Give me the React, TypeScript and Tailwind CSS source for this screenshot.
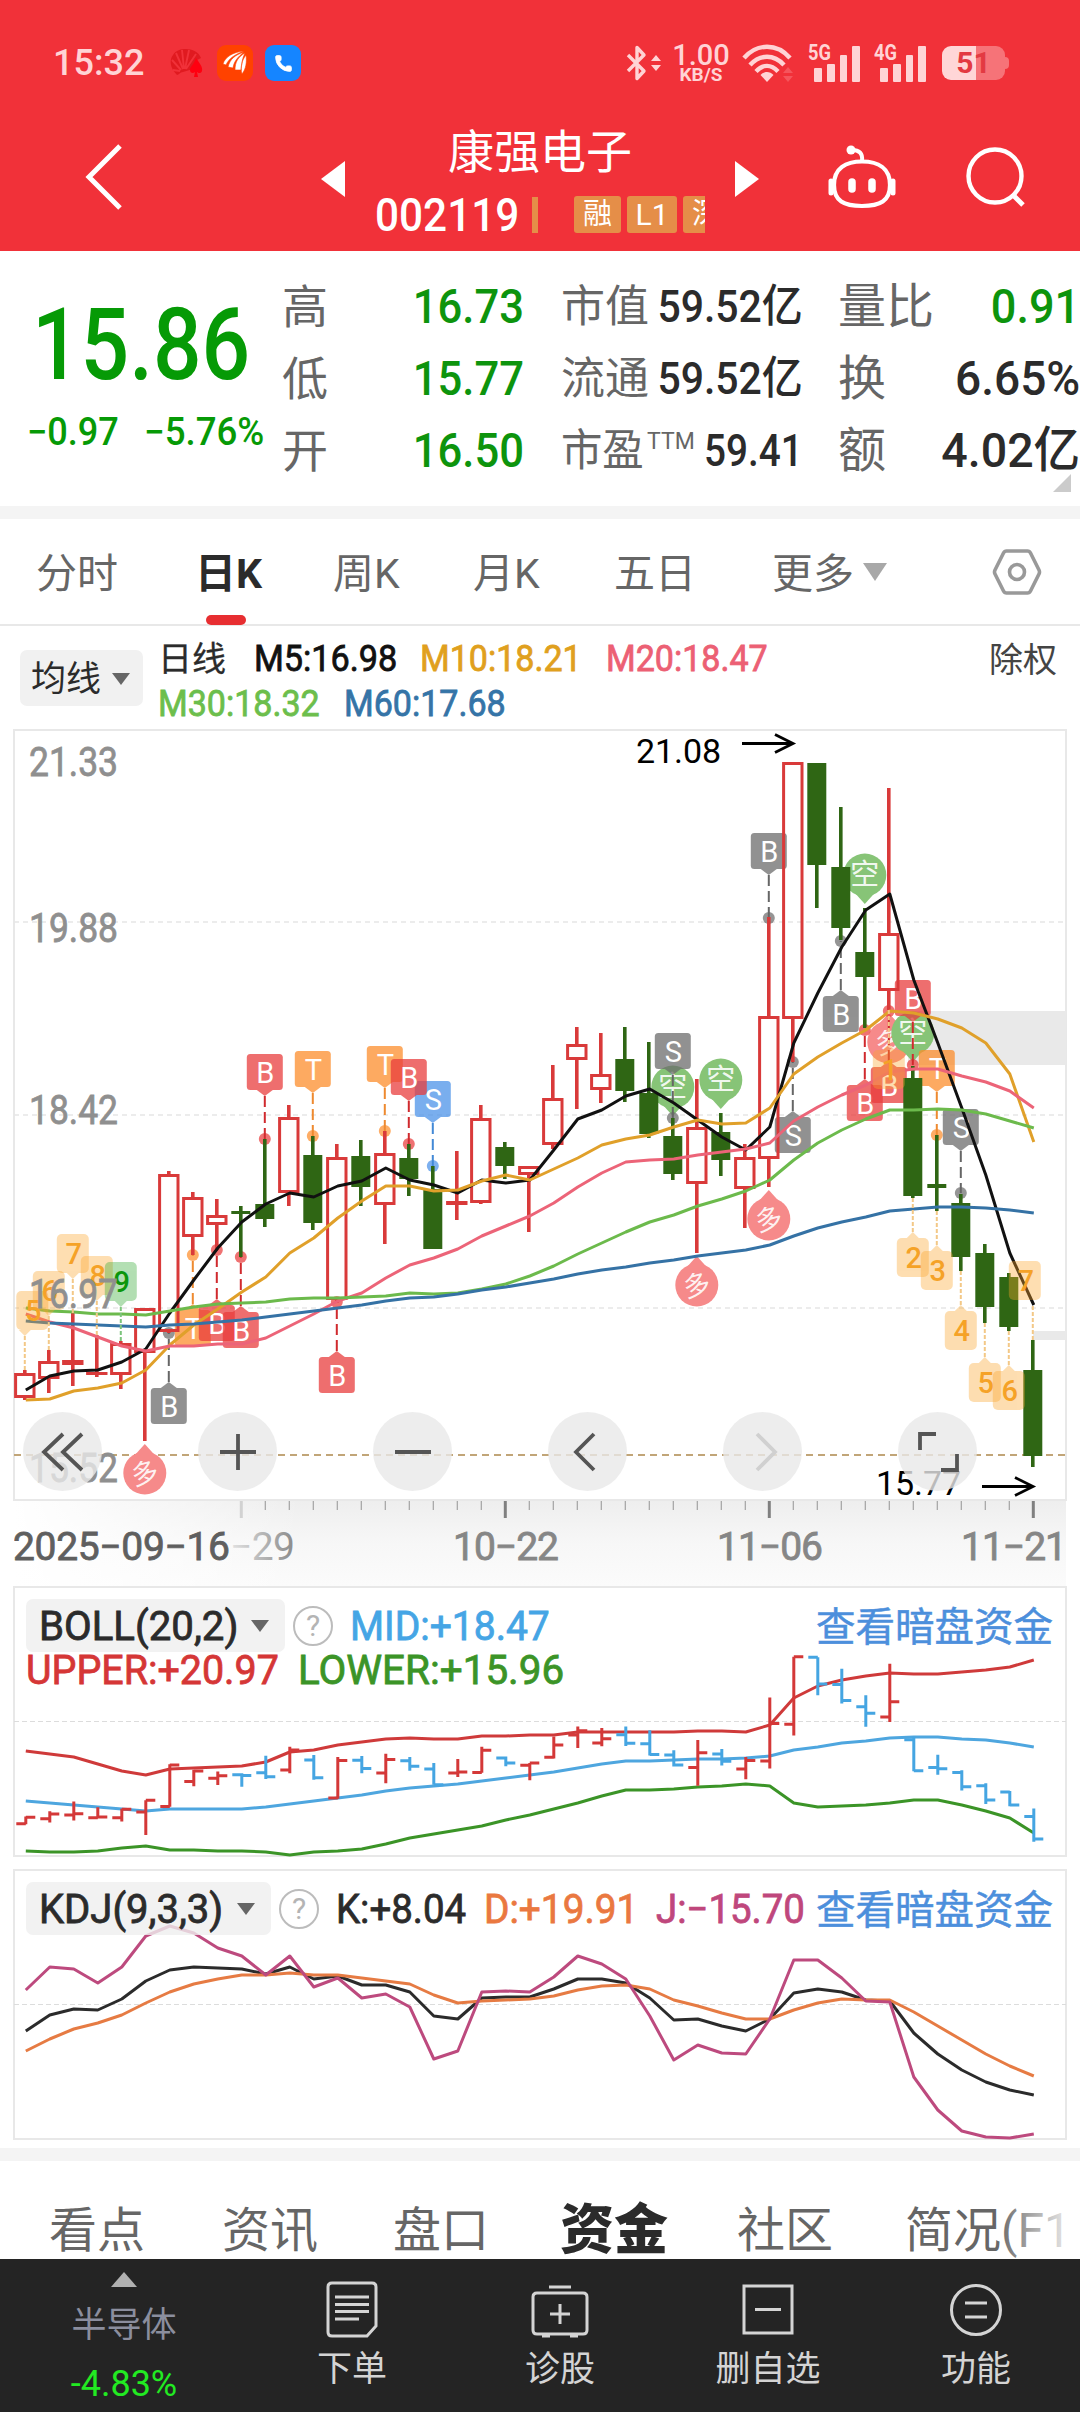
import { Phone } from 'lucide-react';

// ============================================
// DATA
// ============================================

type Candle = [up: 0 | 1, high: number, top: number, bottom: number, low: number];

// Chart geometry: one candle every STEP pixels
const X0 = 24.8;
const STEP = 24;
const cx = (i: number) => X0 + STEP * i;

const candles: Candle[] = [
  [1, 1370, 1373, 1398, 1400], [1, 1350, 1361, 1379, 1393], [1, 1313, 1360, 1365, 1386],
  [1, 1335, 1372, 1375, 1377], [1, 1341, 1343, 1375, 1389], [1, 1308, 1308, 1353, 1441],
  [1, 1171, 1174, 1332, 1333], [1, 1192, 1197, 1237, 1255], [1, 1199, 1215, 1225, 1250],
  [0, 1206, 1211, 1214, 1257], [0, 1139, 1204, 1219, 1227], [1, 1105, 1117, 1193, 1206],
  [0, 1136, 1155, 1223, 1230], [1, 1144, 1157, 1300, 1303], [0, 1140, 1156, 1187, 1206],
  [1, 1131, 1153, 1205, 1244], [0, 1144, 1158, 1179, 1196], [0, 1166, 1189, 1249, 1249],
  [1, 1151, 1201, 1205, 1220], [1, 1105, 1118, 1203, 1204], [0, 1142, 1147, 1166, 1179],
  [1, 1166, 1166, 1175, 1232], [1, 1065, 1098, 1145, 1149], [1, 1027, 1044, 1060, 1109],
  [1, 1033, 1074, 1090, 1103], [0, 1027, 1059, 1091, 1102], [0, 1042, 1093, 1134, 1138],
  [0, 1118, 1136, 1174, 1180], [1, 1079, 1127, 1184, 1253], [0, 1113, 1132, 1160, 1176],
  [1, 1144, 1157, 1189, 1228], [1, 917, 1016, 1159, 1187], [1, 762, 762, 1019, 1062],
  [0, 763, 763, 865, 908], [0, 807, 867, 928, 940], [0, 908, 952, 977, 1028],
  [1, 788, 933, 991, 1010], [0, 1066, 1078, 1196, 1198], [0, 1135, 1184, 1188, 1211],
  [0, 1194, 1203, 1257, 1271], [0, 1244, 1253, 1307, 1323], [0, 1273, 1277, 1327, 1331],
  [0, 1340, 1370, 1456, 1467],
];

const m5 = [1390, 1376, 1371, 1370, 1362, 1349, 1313, 1280, 1248, 1222, 1204, 1193, 1197, 1186, 1181, 1168, 1180, 1185, 1193, 1180, 1183, 1180, 1150, 1119, 1110, 1096, 1089, 1103, 1120, 1137, 1150, 1127, 1043, 993, 947, 910, 894, 980, 1043, 1108, 1175, 1253, 1305];
const m10 = [1400, 1399, 1391, 1388, 1383, 1370, 1345, 1325, 1309, 1292, 1277, 1253, 1238, 1218, 1201, 1186, 1186, 1191, 1190, 1181, 1175, 1180, 1169, 1158, 1145, 1139, 1135, 1127, 1120, 1124, 1123, 1108, 1074, 1057, 1043, 1030, 1011, 1013, 1019, 1028, 1043, 1074, 1142];
const m20 = [1314, 1322, 1328, 1337, 1346, 1351, 1346, 1346, 1344, 1344, 1338, 1326, 1314, 1301, 1293, 1278, 1265, 1258, 1249, 1236, 1226, 1216, 1203, 1187, 1173, 1162, 1160, 1159, 1155, 1152, 1149, 1143, 1121, 1107, 1095, 1085, 1072, 1069, 1069, 1076, 1082, 1091, 1108];
const m30 = [1308, 1311, 1312, 1314, 1314, 1315, 1311, 1307, 1304, 1303, 1302, 1299, 1298, 1298, 1297, 1296, 1293, 1294, 1293, 1289, 1284, 1276, 1266, 1254, 1243, 1232, 1222, 1215, 1206, 1199, 1191, 1180, 1160, 1143, 1130, 1119, 1110, 1110, 1109, 1110, 1114, 1121, 1128];
const m60 = [1321, 1323, 1324, 1325, 1326, 1327, 1325, 1324, 1322, 1320, 1317, 1314, 1311, 1308, 1305, 1301, 1298, 1297, 1294, 1290, 1287, 1283, 1279, 1274, 1270, 1267, 1263, 1260, 1256, 1253, 1250, 1245, 1236, 1228, 1222, 1217, 1211, 1209, 1207, 1207, 1208, 1210, 1213];

const bollUp = [1751, 1754, 1757, 1764, 1771, 1775, 1769, 1768, 1767, 1766, 1762, 1752, 1750, 1745, 1742, 1739, 1738, 1739, 1739, 1736, 1736, 1735, 1735, 1732, 1732, 1732, 1732, 1732, 1731, 1731, 1732, 1725, 1698, 1686, 1680, 1676, 1673, 1674, 1674, 1672, 1670, 1667, 1660];
const bollMid = [1801, 1803, 1805, 1807, 1809, 1811, 1809, 1809, 1809, 1809, 1807, 1804, 1801, 1798, 1795, 1791, 1788, 1786, 1784, 1781, 1778, 1775, 1772, 1768, 1764, 1761, 1761, 1760, 1759, 1759, 1758, 1756, 1750, 1747, 1743, 1741, 1738, 1737, 1737, 1739, 1740, 1743, 1747];
const bollLow = [1851, 1852, 1852, 1851, 1848, 1846, 1850, 1850, 1851, 1851, 1852, 1855, 1852, 1851, 1849, 1844, 1838, 1834, 1830, 1826, 1820, 1815, 1809, 1803, 1796, 1790, 1790, 1789, 1787, 1786, 1784, 1786, 1803, 1807, 1806, 1805, 1803, 1800, 1800, 1805, 1811, 1818, 1833];

const kLine = [2031, 2015, 2009, 2010, 1999, 1981, 1970, 1967, 1968, 1969, 1974, 1967, 1979, 1976, 1985, 1985, 1992, 2016, 2019, 1998, 1997, 1997, 1989, 1979, 1979, 1983, 1998, 2020, 2019, 2026, 2031, 2019, 1993, 1989, 1992, 2000, 2001, 2033, 2054, 2070, 2082, 2090, 2095];
const dLine = [2051, 2039, 2029, 2023, 2015, 2003, 1992, 1984, 1979, 1975, 1975, 1973, 1975, 1975, 1978, 1981, 1984, 1995, 2003, 2001, 2000, 1999, 1996, 1990, 1986, 1985, 1989, 2000, 2006, 2013, 2019, 2019, 2010, 2003, 1999, 2000, 2000, 2012, 2026, 2040, 2054, 2066, 2076];
const jLine = [1990, 1967, 1969, 1983, 1967, 1936, 1926, 1933, 1948, 1956, 1975, 1956, 1987, 1978, 1998, 1994, 2007, 2059, 2051, 1992, 1991, 1992, 1977, 1956, 1964, 1979, 2016, 2060, 2045, 2053, 2054, 2019, 1960, 1960, 1978, 2001, 2002, 2077, 2110, 2131, 2137, 2138, 2134];

const RED = '#d93a3a';
const GREEN = '#2f6614';

const tagFill: Record<string, string> = { r: '#e93c3c', o: '#fd8d2b', b: '#4b92e9', g: '#6c6c6c' };
const stemFill: Record<string, string> = { r: '#d02a2e', o: '#ee8a30', b: '#4389d6', g: '#666666' };

// index, letter, tone, y of the dot, y of the box top
const tags: [number, string, string, number, number][] = [
  [7, 'T', 'o', 1255, 1310], [8, 'B', 'r', 1250, 1305], [9, 'B', 'r', 1257, 1312],
  [6, 'B', 'g', 1333, 1388], [10, 'B', 'r', 1139, 1054], [12, 'T', 'o', 1136, 1051],
  [13, 'B', 'r', 1302, 1357], [15, 'T', 'o', 1131, 1046], [17, 'S', 'b', 1166, 1081],
  [16, 'B', 'r', 1144, 1059], [27, 'S', 'g', 1118, 1033], [31, 'B', 'g', 918, 833],
  [32, 'S', 'g', 1062, 1117], [34, 'B', 'g', 941, 996], [35, 'B', 'r', 1030, 1085],
  [36, 'B', 'r', 1011, 1067], [37, 'B', 'r', 1065, 980], [38, 'T', 'o', 1135, 1050],
  [39, 'S', 'g', 1193, 1109],
];

// index, x shift, digit, y where the dotted stem starts, above/below
const counts: [number, number, string, number, 'up' | 'down'][] = [
  [0, 7.5, '5', 1370, 'up'], [1, 0, '6', 1350, 'up'], [2, 0, '7', 1313, 'up'],
  [3, 0, '8', 1335, 'up'], [4, 0, '9', 1341, 'up'], [36, 0, '1', 1010, 'down'],
  [37, 0, '2', 1198, 'down'], [38, 0, '3', 1211, 'down'], [39, 0, '4', 1271, 'down'],
  [40, 0, '5', 1323, 'down'], [41, 0, '6', 1331, 'down'], [42, -8, '7', 1340, 'up'],
];

const bubbles: [number, string, number][] = [
  [5, '多', 1473], [28, '多', 1285], [31, '多', 1219], [36, '多', 1042],
  [27, '空', 1087], [29, '空', 1080], [35, '空', 875], [37, '空', 1033],
];

// ============================================
// CHART PIECES
// ============================================

function Line({ data, color, width = 3 }: { data: number[]; color: string; width?: number }) {
  const points = data.map((y, i) => `${cx(i) + 1},${y}`).join(' ');
  return <polyline points={points} fill="none" stroke={color} strokeWidth={width} strokeLinejoin="round" />;
}

function Tag({ tag: [i, letter, tone, dot, top] }: { tag: [number, string, string, number, number] }) {
  const x = cx(i);
  const above = top < dot;
  const edge = above ? top + 36 : top;
  const tip = above ? edge + 6 : edge - 6;
  return (
    <g>
      <circle cx={x} cy={dot} r="6" fill={tagFill[tone]} opacity=".72" />
      <line x1={x} x2={x} y1={tip} y2={dot} stroke={stemFill[tone]} strokeWidth="2" strokeDasharray="11 5" />
      <g opacity=".74" fill={tagFill[tone]}>
        <rect x={x - 18} y={top} width="36" height="36" rx="3.5" />
        <path d={`M${x - 8} ${edge}L${x} ${tip}L${x + 8} ${edge}z`} />
      </g>
      <text x={x + 0.5} y={top + 28.5} fontSize="29" fill="#fff" textAnchor="middle">{letter}</text>
    </g>
  );
}

function Count({ item: [i, dx, digit, start, dir] }: { item: [number, number, string, number, 'up' | 'down'] }) {
  const x = cx(i);
  const bx = x + dx;
  const tip = dir === 'up' ? start - 34 : start + 34;
  const edge = dir === 'up' ? tip - 6 : tip + 6;
  const top = dir === 'up' ? edge - 39 : edge;
  const green = digit === '9';
  return (
    <g>
      <line x1={x} x2={x} y1={start} y2={tip} stroke={green ? '#7cc47c' : '#f3c887'} strokeWidth="2" strokeDasharray="4 2" />
      <g opacity=".37" fill={green ? '#31a831' : '#fba62c'}>
        <rect x={bx - 16} y={top} width="32" height="39" rx="5" />
        {dx > -1 && <path d={`M${x - 6} ${edge}L${x} ${tip}L${x + 6} ${edge}z`} />}
      </g>
      <text x={bx + 1} y={top + 30} fontSize="29" fontWeight="500" fill={green ? '#0b960b' : '#f5a227'} textAnchor="middle">{digit}</text>
    </g>
  );
}

function Bubble({ item: [i, label, y] }: { item: [number, string, number] }) {
  const x = cx(i);
  const long = label === '多';
  const color = long ? '#f68a8a' : '#87c477';
  return (
    <g>
      <circle cx={x} cy={y} r="21.5" fill={color} />
      <path d={long ? `M${x - 9} ${y - 19}L${x} ${y - 29}L${x + 9} ${y - 19}z` : `M${x - 9} ${y + 19}L${x} ${y + 29}L${x + 9} ${y + 19}z`} fill={color} />
      <text x={x} y={y + 10} fontSize={long ? 27 : 29} fill="#fff" fillOpacity=".9" textAnchor="middle" transform={long ? `rotate(-14 ${x} ${y})` : undefined}>{label}</text>
    </g>
  );
}

function CandleStick({ i, c: [up, high, top, bottom, low] }: { i: number; c: Candle }) {
  const x = cx(i);
  if (!up) {
    return (
      <g fill={GREEN}>
        <rect x={x - 1.8} y={high} width="3.6" height={low - high} />
        <rect x={x - 9.5} y={top} width="19" height={bottom - top} />
      </g>
    );
  }
  const flat = bottom - top < 7;
  return (
    <g fill={RED}>
      <rect x={x - 1.8} y={high} width="3.6" height={top - high} />
      <rect x={x - 1.8} y={bottom} width="3.6" height={low - bottom} />
      {flat ? (
        <rect x={x - 10.7} y={top} width="21.4" height={bottom - top} />
      ) : (
        <rect x={x - 9.2} y={top + 1.5} width="18.4" height={bottom - top - 3} fill="none" stroke={RED} strokeWidth="3" />
      )}
    </g>
  );
}

function AxisLabel({ y, children }: { y: number; children: string }) {
  return (
    <text x="29" y={y} fontSize="40" fill="#8f8f8f" stroke="#8f8f8f" strokeWidth=".8" textLength="89" lengthAdjust="spacingAndGlyphs">{children}</text>
  );
}

function KChart() {
  return (
    <svg viewBox="0 729 1080 772" className="block h-[772px] w-[1080px]">
      <rect x="14" y="730" width="1052" height="770" fill="#fff" stroke="#e8e8e8" strokeWidth="2" />
      {[922, 1115, 1308].map((y) => (
        <line key={y} x1="14" x2="1066" y1={y} y2={y} stroke="#e6e6e6" strokeWidth="1.6" strokeDasharray="5 4" />
      ))}
      <line x1="14" x2="1066" y1="1455" y2="1455" stroke="#c1a578" strokeWidth="1.8" strokeDasharray="7 5" />
      <rect x="908" y="1011" width="158" height="54" fill="#e9e9e9" />
      <rect x="1033" y="1331" width="33" height="9" fill="#e9e9e9" />

      {bubbles.map((b) => <Bubble key={`${b[0]}${b[2]}`} item={b} />)}
      {tags.map((t) => <Tag key={`${t[0]}${t[3]}`} tag={t} />)}
      {candles.map((c, i) => <CandleStick key={i} i={i} c={c} />)}

      <Line data={m5} color="#111" />
      <Line data={m10} color="#e0a02a" />
      <Line data={m20} color="#ec6478" />
      <Line data={m30} color="#6cba4c" />
      <Line data={m60} color="#3572a5" />

      {counts.map((n) => <Count key={`${n[0]}`} item={n} />)}

      <AxisLabel y={776}>21.33</AxisLabel>
      <AxisLabel y={942}>19.88</AxisLabel>
      <AxisLabel y={1124}>18.42</AxisLabel>
      <AxisLabel y={1308}>16.97</AxisLabel>
      <AxisLabel y={1482}>15.52</AxisLabel>

      <text x="636" y="763" fontSize="34" fill="#000" textLength="85" lengthAdjust="spacing">21.08</text>
      <path d="M742 743.500H793M775 734.500L793 743.500L775 752.500" fill="none" stroke="#000" strokeWidth="2.800" />
      <text x="876" y="1495" fontSize="34" fill="#000" textLength="85" lengthAdjust="spacing">15.77</text>
      <path d="M982 1486.500H1033M1015 1477.500L1033 1486.500L1015 1495.500" fill="none" stroke="#000" strokeWidth="2.800" />
    </svg>
  );
}

function TimeAxis() {
  const ticks = Array.from({ length: 34 }, (_, k) => k + 9);
  return (
    <div className="mx-[14px] h-[85px] bg-gradient-to-b from-[#eeeeee] via-[#f7f7f7] to-[#fbfbfb]">
      <svg viewBox="14 1501 1052 85" className="block h-[85px] w-[1052px]">
        <defs>
          <linearGradient id="fadeLeft">
            <stop offset="0" stopColor="#fff" />
            <stop offset="1" stopColor="#fff" stopOpacity="0" />
          </linearGradient>
          <linearGradient id="fadeText">
            <stop offset="0" stopColor="#e3e3e3" />
            <stop offset="1" stopColor="#8a8a8a" />
          </linearGradient>
        </defs>
        <rect x="14" y="1501" width="290" height="85" fill="url(#fadeLeft)" />
        {ticks.map((i) => {
          const major = (i - 9) % 11 === 0;
          return (
            <line key={i} x1={cx(i) + 0.5} x2={cx(i) + 0.5} y1="1501" y2={major ? 1518 : 1510} stroke={i === 9 ? '#d2d2d2' : major ? '#808080' : '#a2a2a2'} strokeWidth={major ? 3 : 1.2} />
          );
        })}
        <g fontSize="39" fill="#868686" stroke="#868686" strokeWidth=".8">
          <text x="13" y="1560" fill="#5f5f5f" stroke="#5f5f5f" textLength="217" lengthAdjust="spacing">2025−09−16</text>
          <text x="230" y="1560" fill="url(#fadeText)" stroke="none" textLength="65" lengthAdjust="spacing">−29</text>
          <text x="453" y="1560" textLength="106" lengthAdjust="spacing">10−22</text>
          <text x="717" y="1560" textLength="106" lengthAdjust="spacing">11−06</text>
          <text x="961" y="1560" textLength="106" lengthAdjust="spacing">11−21</text>
        </g>
      </svg>
    </div>
  );
}

function BollChart() {
  // Candle prices are squeezed into this panel's own scale
  const py = (y: number) => 1657 + (y - 762.5) * 0.2624;
  return (
    <svg viewBox="0 1586 1080 271" className="block h-[271px] w-[1080px]">
      <rect x="14" y="1587" width="1052" height="269" fill="#fff" stroke="#e8e8e8" strokeWidth="2" />
      <line x1="14" x2="1066" y1="1721.500" y2="1721.500" stroke="#dcdcdc" strokeDasharray="5 3" />
      <Line data={bollUp} color="#cf3a3a" />
      <Line data={bollMid} color="#4ea6df" />
      <Line data={bollLow} color="#3b9427" />
      {candles.map(([up, high, top, bottom, low], i) => {
        const x = cx(i) + 1;
        const open = py(up ? bottom : top);
        const close = py(up ? top : bottom);
        return (
          <path key={i} d={`M${x} ${py(high)}V${py(low)}M${x - 9.5} ${open}H${x}M${x} ${close}H${x + 9.5}`} stroke={up ? '#d43838' : '#45a5e2'} strokeWidth="3" />
        );
      })}
    </svg>
  );
}

function KdjChart() {
  return (
    <svg viewBox="0 1869 1080 271" className="block h-[271px] w-[1080px]">
      <rect x="14" y="1870" width="1052" height="269" fill="#fff" stroke="#e8e8e8" strokeWidth="2" />
      <line x1="14" x2="1066" y1="2004.500" y2="2004.500" stroke="#dcdcdc" strokeDasharray="5 3" />
      <Line data={kLine} color="#2b2b2b" />
      <Line data={dLine} color="#e67b43" />
      <Line data={jLine} color="#bd4a7e" />
    </svg>
  );
}

// ============================================
// SMALL PARTS
// ============================================

function Caret({ className }: { className: string }) {
  return (
    <svg viewBox="0 0 20 14" preserveAspectRatio="none" className={className}>
      <path d="M0 0H20L10 14z" fill="currentColor" />
    </svg>
  );
}

function Help() {
  return (
    <span className="flex h-[40px] w-[40px] shrink-0 items-center justify-center rounded-full border-[2.5px] border-[#bcbcbc] text-[30px] leading-none text-[#b4b4b4]">?</span>
  );
}

function Signal({ label }: { label: string }) {
  return (
    <div className="relative flex h-[37px] w-[52px] items-end gap-[5px] pl-[6px]">
      <span className="absolute -top-[3px] left-0 origin-left scale-x-[.83] text-[22px] font-bold leading-none">{label}</span>
      <span className="h-[14px] w-[8px] rounded-[1px] bg-current" />
      <span className="h-[18px] w-[8px] rounded-[1px] bg-current" />
      <span className="h-[27px] w-[8px] rounded-[1px] bg-current" />
      <span className="h-[36px] w-[8px] rounded-[1px] bg-current" />
    </div>
  );
}

function StatusBar() {
  return (
    <div className="flex h-[82px] items-end justify-between pr-[75px] pl-[53px] text-[#ffd3d5]">
      <div className="flex items-center">
        <span className="w-[116px] text-[36px] font-medium leading-[38px]">15:32</span>
        <svg viewBox="0 0 34 30" className="h-[30px] w-[34px]">
          <path d="M8 27C1 20 0 12 4 7C7 2 12 1 17 1C23 1 30 4 32 10L28 12C31 16 27 18 24 21L14 24C11 24 10 27 8 27z" fill="#e01a20" />
          <path d="M12 22L3 12M14 21L7 5M15 21L13 2M16 21L20 2M17 21L27 6M4 22L11 23" stroke="#f13139" strokeWidth="1.900" />
          <path d="M27 10C31 16 34 19 33 23C32 26 29 25 28 24L29 29H25L26 24C24 26 21 25 21 22C21 19 25 16 27 10z" fill="#ff0010" />
        </svg>
        <svg viewBox="0 0 36 36" className="ml-[14px] h-[36px] w-[36px]">
          <rect width="36" height="36" rx="9" fill="#ff4200" />
          <path d="M6 19C8 12 16 7 27 6C19 9 12 13 9 20zM11 22C13 14 18 10 27 7C21 12 17 16 16 23zM18 25C18 17 21 12 28 8C25 14 25 18 24 25zM25 29C23 22 25 15 29 10C30 17 29 24 25 29z" fill="#fff" stroke="#ff4200" strokeWidth=".6" />
        </svg>
        <span className="ml-[12px] flex h-[36px] w-[36px] items-center justify-center rounded-[9px] bg-[#1585ff]">
          <Phone className="h-[19px] w-[19px] fill-white text-white" strokeWidth={1} />
        </span>
      </div>

      <div className="flex h-[38px] items-center">
        <svg viewBox="0 0 22 38" className="h-[38px] w-[22px]">
          <path d="M2 11L18 27L11 34.500V3.500L18 11L2 27" fill="none" stroke="currentColor" strokeWidth="3.400" strokeLinejoin="round" />
        </svg>
        <svg viewBox="0 0 10 16" className="ml-[3px] h-[16px] w-[10px]">
          <path d="M5 0L10 6H0zM5 16L0 10H10z" fill="currentColor" />
        </svg>
        <div className="ml-[12px] flex w-[56px] flex-col items-center">
          <span className="text-[29px] font-medium leading-[22px]">1.00</span>
          <span className="text-[19px] font-bold leading-[17px]">KB/S</span>
        </div>
        <svg viewBox="0 0 54 38" className="ml-[13px] h-[38px] w-[54px]">
          <g fill="none" stroke="currentColor" strokeWidth="4.400">
            <path d="M2 14C15 -1 35 -1 48 14" />
            <path d="M8 21C18 10 32 10 42 21" />
            <path d="M14 27.500C21 20 29 20 36 27.500" />
          </g>
          <path d="M25 38L18.500 31C22 27 28 27 31.500 31z" fill="currentColor" />
          <path d="M46 23L51 29H41zM46 38L41 32H51z" fill="#f5555c" />
        </svg>
        <div className="ml-[12px]"><Signal label="5G" /></div>
        <div className="ml-[14px]"><Signal label="4G" /></div>
        <div className="relative ml-[16px] flex h-[34px] w-[63px] items-center justify-center rounded-[9px] bg-[linear-gradient(to_right,#ffd6d7_54%,#f67378_54%)]">
          <span className="text-[30px] font-bold leading-none text-[#e33a42]">51</span>
          <span className="absolute -right-[4px] h-[12px] w-[4px] rounded-r bg-[#f67378]" />
        </div>
      </div>
    </div>
  );
}

function TitleBar() {
  return (
    <div className="flex h-[169px] items-center pl-[84px] text-white">
      <svg viewBox="0 0 40 66" className="mt-[20px] h-[66px] w-[40px]">
        <path d="M36 2L5 33L36 64" fill="none" stroke="currentColor" strokeWidth="5" />
      </svg>
      <svg viewBox="0 0 24 36" className="mt-[24px] ml-[197px] h-[36px] w-[24px]">
        <path d="M24 0V36L0 18z" fill="currentColor" />
      </svg>
      <div className="ml-[30px] flex w-[330px] flex-col items-center pt-[26px]">
        <div className="text-[46px] leading-[56px]">康强电子</div>
        <div className="mt-[14px] flex h-[42px] w-full items-center overflow-hidden">
          <span className="w-[157px] shrink-0 origin-left scale-x-[.92] pt-[1px] text-[46px] font-medium leading-[50px]">002119</span>
          <span className="h-[36px] w-[6px] shrink-0 bg-[#e58e48]" />
          <span className="ml-[36px] flex h-[37px] w-[47px] shrink-0 items-center justify-center rounded-[3px] bg-[#e58e48] text-[29px] leading-none">融</span>
          <span className="ml-[6px] flex h-[37px] w-[50px] shrink-0 items-center justify-center rounded-[3px] bg-[#e58e48] text-[30px] leading-none">L1</span>
          <span className="ml-[6px] flex h-[37px] w-[22px] shrink-0 items-center overflow-hidden rounded-l-[3px] bg-[#e58e48] pl-[9px] text-[29px] leading-none">深</span>
        </div>
      </div>
      <svg viewBox="0 0 24 36" className="mt-[24px] ml-[30px] h-[36px] w-[24px]">
        <path d="M0 0V36L24 18z" fill="currentColor" />
      </svg>
      <svg viewBox="0 0 72 66" className="mt-[20px] ml-[67px] h-[66px] w-[72px]" fill="none" stroke="currentColor">
        <path d="M36 17.500C52 17.500 64 24 64 41C64 57 54 62 36 62C18 62 8 57 8 41C8 24 20 17.500 36 17.500z" strokeWidth="4.200" />
        <path d="M5 37V49M67 37V49" strokeWidth="5" strokeLinecap="round" />
        <path d="M36 17C37 9 33 6 26 6" strokeWidth="4" />
        <circle cx="25" cy="6" r="4.500" fill="currentColor" stroke="none" />
        <path d="M26 38V45M46 38V45" strokeWidth="7.500" strokeLinecap="round" />
      </svg>
      <svg viewBox="0 0 62 62" className="mt-[20px] ml-[67px] h-[62px] w-[62px]">
        <circle cx="30" cy="30" r="26.500" fill="none" stroke="currentColor" strokeWidth="4.400" />
        <path d="M47 48L58 59" stroke="currentColor" strokeWidth="5" />
      </svg>
    </div>
  );
}

function QuotePanel() {
  return (
    <section className="relative flex h-[255px] bg-white pt-[20px]">
      <div className="w-[282px] text-[#069a06]">
        <div className="mt-[24px] ml-[32px] origin-left scale-x-[.855] text-[100px] font-medium leading-none">15.86</div>
        <div className="mt-[18px] flex pl-[27px] text-[38px] font-medium leading-none whitespace-nowrap">
          <span className="w-[117px] origin-left scale-x-[.95]">−0.97</span>
          <span className="origin-left scale-x-[.965]">−5.76%</span>
        </div>
      </div>

      <div className="w-[242px] text-[46px] leading-[72px] text-[#666]">
        {[['高', '16.73'], ['低', '15.77'], ['开', '16.50']].map(([label, value]) => (
          <div key={label} className="flex h-[72px] justify-between">
            <span>{label}</span>
            <span className="origin-right scale-x-[.89] text-[49px] font-medium text-[#0d940d]">{value}</span>
          </div>
        ))}
      </div>

      <div className="ml-[37px] w-[242px] text-[44px] leading-[72px] text-[#666]">
        {[['市值', '59.52亿'], ['流通', '59.52亿']].map(([label, value]) => (
          <div key={label} className="flex h-[72px] justify-between whitespace-nowrap">
            <span className="w-[60px] shrink-0">{label}</span>
            <span className="origin-right scale-x-[.91] text-[45px] font-medium text-[#2b2b2b]">{value}</span>
          </div>
        ))}
        <div className="flex h-[72px] whitespace-nowrap">
          <span className="w-[86px] shrink-0 origin-left scale-x-[.94]">市盈</span>
          <span className="-mt-[9px] w-[40px] shrink-0 text-[23px]">TTM</span>
          <span className="ml-auto origin-right scale-x-[.86] text-[45px] font-medium text-[#2b2b2b]">59.41</span>
        </div>
      </div>

      <div className="ml-[35px] w-[242px] text-[48px] leading-[72px] text-[#666]">
        <div className="flex h-[72px] justify-between">
          <span>量比</span>
          <span className="origin-right scale-x-[.92] text-[49px] font-medium text-[#0d940d]">0.91</span>
        </div>
        <div className="flex h-[72px] justify-between">
          <span>换</span>
          <span className="origin-right scale-x-[.94] text-[49px] font-medium text-[#2b2b2b]">6.65%</span>
        </div>
        <div className="flex h-[72px] justify-between">
          <span>额</span>
          <span className="origin-right scale-x-[.95] text-[49px] font-medium text-[#2b2b2b]">4.02亿</span>
        </div>
      </div>
      <svg viewBox="0 0 18 18" className="absolute right-[9px] bottom-[14px] h-[18px] w-[18px]">
        <path d="M18 0V18H0z" fill="#cbcbcb" />
      </svg>
    </section>
  );
}

function PeriodTabs() {
  return (
    <nav className="flex h-[107px] items-center border-b-2 border-[#e8e8e8] bg-white pl-[36px] text-[41px] leading-[60px] whitespace-nowrap text-[#666]">
      <span className="w-[159px] pt-[4px]">分时</span>
      <span className="relative w-[138px] pt-[4px] font-bold text-[#2b2b2b]">
        日K
        <span className="absolute top-[75px] left-[11px] h-[10px] w-[40px] rounded-full bg-[#e72e31]" />
      </span>
      <span className="w-[140px] pt-[4px]">周K</span>
      <span className="w-[141px] pt-[4px]">月K</span>
      <span className="w-[158px] pt-[4px]">五日</span>
      <span className="w-[91px] pt-[4px]">更多</span>
      <Caret className="h-[18px] w-[24px] text-[#a8a8a8]" />
      <svg viewBox="0 0 50 48" className="ml-[105px] h-[48px] w-[50px]" fill="none" stroke="#999" strokeWidth="3.6">
        <path d="M14.500 3H35.500Q37.500 3 38.500 5L47 22Q48 24 47 26L38.500 43Q37.500 45 35.500 45H14.500Q12.500 45 11.500 43L3 26Q2 24 3 22L11.500 5Q12.500 3 14.500 3z" />
        <circle cx="25" cy="24" r="7.500" />
      </svg>
    </nav>
  );
}

function AverageRow() {
  return (
    <div className="flex h-[103px] bg-white pl-[20px]">
      <div className="mt-[24px] flex h-[56px] w-[123px] items-center rounded-[7px] bg-[#f1f1f1] pt-[2px] pl-[11px] text-[35px] leading-none text-[#2b2b2b]">
        均线
        <Caret className="ml-[11px] h-[12px] w-[18px] text-[#666]" />
      </div>
      <div className="ml-[15px] w-[831px] text-[36px] leading-[45px] whitespace-nowrap [-webkit-text-stroke:0.8px]">
        <div className="mt-[11px] flex h-[45px]">
          <span className="w-[96px] text-[34px] text-[#2b2b2b] [-webkit-text-stroke:0.3px]">日线</span>
          <span className="w-[166px] origin-left scale-x-[.95] text-[#111]">M5:16.98</span>
          <span className="w-[186px] origin-left scale-x-[.945] text-[#e0a01e]">M10:18.21</span>
          <span className="origin-left scale-x-[.945] text-[#ec6074]">M20:18.47</span>
        </div>
        <div className="flex h-[45px]">
          <span className="w-[186px] origin-left scale-x-[.945] text-[#6cbe4c]">M30:18.32</span>
          <span className="origin-left scale-x-[.945] text-[#3574a7]">M60:17.68</span>
        </div>
      </div>
      <span className="mt-[12px] text-[34px] leading-[45px] whitespace-nowrap text-[#444]">除权</span>
    </div>
  );
}

function ChartButton({ d, faded }: { d: string; faded?: boolean }) {
  return (
    <button className="flex h-[79px] w-[79px] items-center justify-center rounded-full bg-[#e9e9e9]/80">
      <svg viewBox="0 0 48 48" className="h-[48px] w-[48px]">
        <path d={d} fill="none" stroke={faded ? '#d0d0d0' : '#555'} strokeWidth="3.8" />
      </svg>
    </button>
  );
}

function IndicatorChip({ name }: { name: string }) {
  return (
    <div className="flex h-[53px] shrink-0 items-center rounded-[7px] bg-[#efefef]/80 pl-[13px] text-[40px] leading-none whitespace-nowrap text-[#2b2b2b] [-webkit-text-stroke:0.8px]">
      <span className={name === 'KDJ(9,3,3)' ? 'w-[198px] origin-left pt-[3px]' : 'w-[212px] origin-left scale-x-[1.005] pt-[3px]'}>{name}</span>
      <Caret className="mr-[16px] h-[12px] w-[18px] text-[#666]" />
    </div>
  );
}

function BottomItem({ label, children }: { label: string; children: React.ReactNode }) {
  return (
    <div className="flex w-[208px] flex-col items-center pt-[21px]">
      <svg viewBox="0 0 60 60" className="h-[60px] w-[60px]" fill="none" stroke="#d4d4d4" strokeWidth="3">
        {children}
      </svg>
      <span className="mt-[8px] text-[35px] leading-[44px] text-[#d4d4d4]">{label}</span>
    </div>
  );
}

// ============================================
// PAGE
// ============================================

export default function App() {
  return (
    <div className="h-[2412px] w-[1080px] overflow-hidden bg-white font-['Roboto','Noto_Sans_CJK_SC',sans-serif]">
      <header className="h-[251px] bg-[#f13139]">
        <StatusBar />
        <TitleBar />
      </header>

      <QuotePanel />
      <div className="h-[13px] bg-[#f4f4f4]" />
      <PeriodTabs />
      <AverageRow />

      <div className="relative">
        <KChart />
        <div className="absolute bottom-[10px] left-[23px] flex gap-[96px]">
          <ChartButton d="M24 6L5 24L24 42M43 6L24 24L43 42" />
          <ChartButton d="M6 24H42M24 6V42" />
          <ChartButton d="M6 24H42" />
          <ChartButton d="M30 6L12 24L30 42" />
          <ChartButton d="M18 6L36 24L18 42" faded />
          <ChartButton d="M6 22V6H22M43 26V42H27" />
        </div>
      </div>
      <TimeAxis />

      <div className="relative h-[271px]">
        <BollChart />
        <div className="absolute top-[13px] left-[26px] w-[1027px] text-[40px] leading-[40px] whitespace-nowrap">
          <div className="flex h-[53px] items-center">
            <IndicatorChip name="BOLL(20,2)" />
            <div className="ml-[8px]"><Help /></div>
            <span className="ml-[17px] origin-left scale-x-[.975] pt-[3px] text-[#45a5e5] [-webkit-text-stroke:0.8px]">MID:+18.47</span>
            <span className="ml-auto pt-[4px] text-[39.5px] text-[#4c8fdc] [-webkit-text-stroke:0.5px]">查看暗盘资金</span>
          </div>
          <div className="-mt-[1px] flex [-webkit-text-stroke:0.8px]">
            <span className="w-[272px] origin-left scale-x-[.985] text-[#d53636]">UPPER:+20.97</span>
            <span className="origin-left scale-x-[1.01] text-[#3b9427]">LOWER:+15.96</span>
          </div>
        </div>
      </div>

      <div className="relative mt-[12px] h-[271px]">
        <KdjChart />
        <div className="absolute top-[13px] left-[26px] flex h-[53px] w-[1027px] items-center text-[40px] leading-[40px] whitespace-nowrap">
          <IndicatorChip name="KDJ(9,3,3)" />
          <div className="ml-[8px]"><Help /></div>
          <div className="ml-[17px] flex pt-[3px] [-webkit-text-stroke:0.8px]">
            <span className="w-[148px] origin-left scale-x-[.96] text-[#2b2b2b]">K:+8.04</span>
            <span className="w-[172px] origin-left scale-x-[.97] text-[#ea7840]">D:+19.91</span>
            <span className="w-[150px] origin-left scale-x-[.96] text-[#bf477c]">J:−15.70</span>
          </div>
          <span className="ml-auto pt-[4px] text-[39.5px] text-[#4c8fdc] [-webkit-text-stroke:0.5px]">查看暗盘资金</span>
        </div>
      </div>

      <div className="mt-[8px] h-[13px] bg-[#f4f4f4]" />

      <nav className="relative flex h-[98px] items-center pt-[42px] pl-[49px] text-[48px] leading-[56px] whitespace-nowrap text-[#666]">
        <span className="w-[173px]">看点</span>
        <span className="w-[171px]">资讯</span>
        <span className="w-[167px]">盘口</span>
        <span className="w-[177px] text-[54px] font-black text-[#2b2b2b]">资金</span>
        <span className="w-[168px]">社区</span>
        <span className="w-[162px] overflow-hidden">简况(F10)</span>
        <span className="absolute top-0 right-0 h-full w-[84px] bg-gradient-to-r from-white/0 to-white" />
      </nav>

      <footer className="flex h-[153px] bg-[#242424]">
        <div className="flex w-[248px] flex-col items-center pt-[13px]">
          <svg viewBox="0 0 26 15" className="h-[15px] w-[26px]">
            <path d="M13 0L26 15H0z" fill="#b0b0b0" />
          </svg>
          <span className="mt-[15px] text-[35px] leading-[48px] text-[#8b8e9e]">半导体</span>
          <span className="mt-[10px] text-[36px] leading-[48px] text-[#22ea22]">-4.83%</span>
        </div>
        <BottomItem label="下单">
          <path d="M10 3H50Q54 3 54 7V46L45 56H10Q6 56 6 52V7Q6 3 10 3zM13 17H47M13 24.500H47M13 31.500H47M13 39H37" />
        </BottomItem>
        <BottomItem label="诊股">
          <path d="M7 13H53Q57 13 57 17V50Q57 54 53 54H7Q3 54 3 50V17Q3 13 7 13zM19 7H41M30 24V44M20 34H40M12 56H20M40 56H48" />
        </BottomItem>
        <BottomItem label="删自选">
          <path d="M6 6H54V53H6zM17 29.500H43" />
        </BottomItem>
        <BottomItem label="功能">
          <circle cx="30" cy="30" r="24.500" />
          <path d="M19 23H41M19 37H41" />
        </BottomItem>
      </footer>
    </div>
  );
}
